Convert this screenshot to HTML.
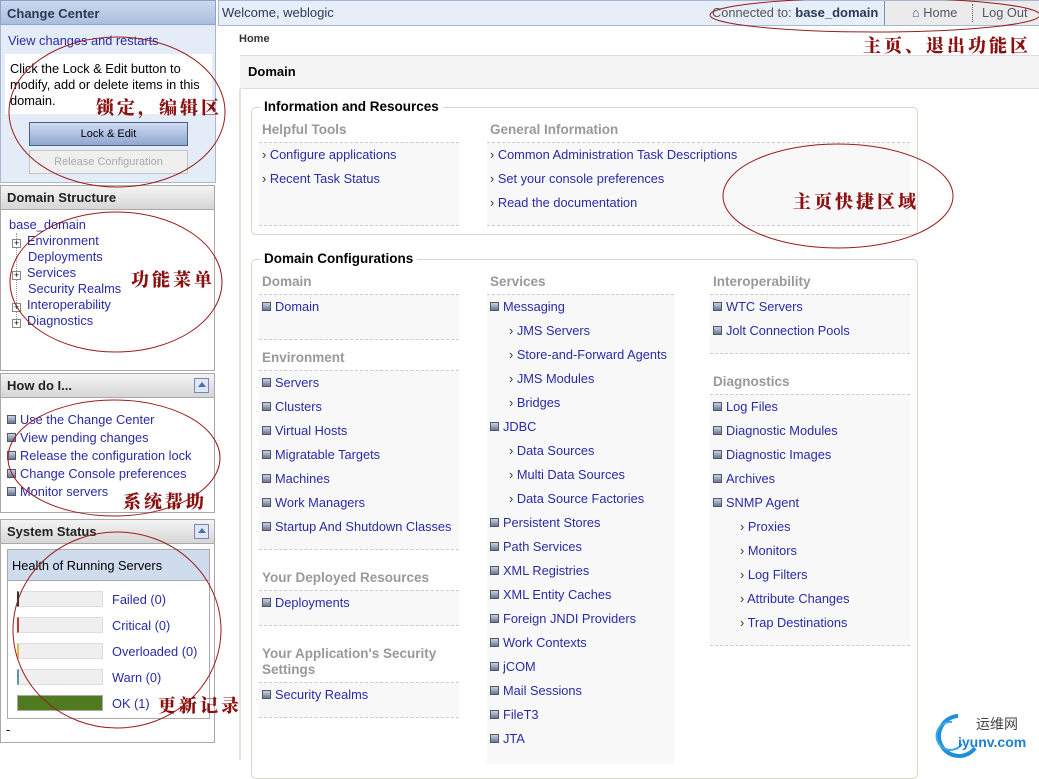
<!DOCTYPE html>
<html><head><meta charset="utf-8">
<style>
*{margin:0;padding:0;box-sizing:border-box}
body{width:1039px;height:760px;overflow:hidden;background:#fff;font-family:"Liberation Sans",Tahoma,sans-serif;font-size:12.8px;position:relative;color:#000}
.p{position:absolute}
.t{position:absolute;white-space:nowrap;line-height:16px;font-size:12.8px}
.l{color:#2a2aa8}
.h{position:absolute;left:0;width:215px;height:25px;border:1px solid #a9a9a9;background:linear-gradient(#f4f4f4,#d6d6d6);font-weight:bold;font-size:13px;padding:4px 6px;color:#222}
.box{position:absolute;border:1px solid #a9a9a9;background:#fff;left:0;width:215px}
.bu::before{content:"";display:inline-block;width:7px;height:7px;border:1px solid #556;background:linear-gradient(#c9d3e6,#6b7895);margin-right:4px;vertical-align:0px}
.sb::before{content:"› ";color:#333}
.hd{position:absolute;color:#999;font-weight:bold;font-size:13.5px;white-space:nowrap}
.col{position:absolute;background:#f8f8f8;border-top:1px dashed #ccc;border-bottom:1px dashed #ccc}
.leg{position:absolute;font-weight:bold;font-size:13.5px;background:#fff;padding:0 4px;white-space:nowrap}
.fs{position:absolute;border:1px solid #d6d6c8;border-radius:5px}
.ico{position:absolute;width:15px;height:15px;border:1px solid #7a86b8;background:#dfe6f5}
.ico::after{content:"";position:absolute;left:3px;top:3px;border:4px solid transparent;border-bottom:5px solid #4a6fb0;border-top:0}
.bar{position:absolute;left:17px;width:86px;height:16px;background:#efefef;border:1px solid #ddd}
.cn{font-family:"Noto Serif CJK SC","Noto Sans CJK SC",serif;font-weight:900;color:#8b1010;font-size:18px;letter-spacing:3px}
.pl{display:inline-block;width:9px;height:9px;border:1px solid #888;background:#fff;font-size:9px;line-height:7px;text-align:center;vertical-align:-1px;margin-right:6px}
</style></head><body>

<!-- Change Center -->
<div class="p" style="left:0;top:0;width:216px;height:183px;background:#e4ecf8;border:1px solid #a9b8d0"></div>
<div class="p" style="left:0;top:0;width:216px;height:25px;background:linear-gradient(#cbd9ee,#a9bedf);border:1px solid #8ea3c6;font-weight:bold;font-size:13px;padding:5px 6px;color:#2b3a55">Change Center</div>
<div class="t l" style="left:8px;top:33px">View changes and restarts</div>
<div class="p" style="left:5px;top:54px;width:207px;height:60px;background:#fff"></div>
<div class="t" style="left:10px;top:61px;line-height:16px;white-space:normal;width:200px">Click the Lock &amp; Edit button to modify, add or delete items in this domain.</div>
<div class="p" style="left:29px;top:122px;width:159px;height:24px;border:1px solid #4a5f85;background:linear-gradient(#cfdcf2,#8fa6cf);text-align:center;line-height:22px;font-size:11px">Lock &amp; Edit</div>
<div class="p" style="left:29px;top:150px;width:159px;height:24px;border:1px solid #c4c4c4;background:#efefef;text-align:center;line-height:22px;font-size:11px;color:#aaa">Release Configuration</div>

<!-- Domain Structure -->
<div class="box" style="top:185px;height:186px"></div>
<div class="h" style="top:185px">Domain Structure</div>
<div class="t l" style="left:9px;top:217px">base_domain</div>
<div class="p" style="left:16px;top:233px;height:88px;border-left:1px dotted #999"></div>
<div class="t" style="left:12px;top:233px;line-height:16px">
<div><span class="pl">+</span><span class="l">Environment</span></div>
<div style="padding-left:16px" class="l">Deployments</div>
<div><span class="pl">+</span><span class="l">Services</span></div>
<div style="padding-left:16px" class="l">Security Realms</div>
<div><span class="pl">+</span><span class="l">Interoperability</span></div>
<div><span class="pl">+</span><span class="l">Diagnostics</span></div>
</div>

<!-- How do I -->
<div class="box" style="top:373px;height:140px"></div>
<div class="h" style="top:373px">How do I...</div>
<div class="ico" style="left:194px;top:378px"></div>
<div class="t" style="left:7px;top:411px;line-height:18px">
<div class="bu l">Use the Change Center</div>
<div class="bu l">View pending changes</div>
<div class="bu l">Release the configuration lock</div>
<div class="bu l">Change Console preferences</div>
<div class="bu l">Monitor servers</div>
</div>

<!-- System Status -->
<div class="box" style="top:519px;height:224px"></div>
<div class="h" style="top:519px">System Status</div>
<div class="ico" style="left:194px;top:524px"></div>
<div class="p" style="left:7px;top:549px;width:203px;height:170px;border:1px solid #aaa"></div>
<div class="p" style="left:8px;top:550px;width:201px;height:31px;background:#cfdcee;border-bottom:1px solid #aaa;padding:8px 4px;font-size:12.8px">Health of Running Servers</div>
<div class="bar" style="top:591px;border-left:2px solid #333"></div><div class="t l" style="left:112px;top:592px">Failed (0)</div>
<div class="bar" style="top:617px;border-left:2px solid #c33"></div><div class="t l" style="left:112px;top:618px">Critical (0)</div>
<div class="bar" style="top:643px;border-left:2px solid #e9b64a"></div><div class="t l" style="left:112px;top:644px">Overloaded (0)</div>
<div class="bar" style="top:669px;border-left:2px solid #5a9aa8"></div><div class="t l" style="left:112px;top:670px">Warn (0)</div>
<div class="bar" style="top:695px;background:#4f7a1f;border-color:#aaa"></div><div class="t l" style="left:112px;top:696px">OK (1)</div>
<div class="t" style="left:6px;top:722px">-</div>

<!-- top bar -->
<div class="p" style="left:218px;top:0;width:821px;height:26px;background:#e6eef9;border:1px solid #a9b8d0"></div>
<div class="t" style="left:222px;top:5px;font-size:13px;color:#2b3a55">Welcome, weblogic</div>
<div class="t" style="left:712px;top:5px;color:#555">Connected to: <b style="color:#2b3a55;font-size:13px">base_domain</b></div>
<div class="p" style="left:884px;top:1px;width:155px;height:24px;background:#ebebeb;border-left:1px solid #7f8fb0"></div>
<div class="t" style="left:912px;top:5px;color:#556"><span style="color:#3a5a9a">⌂</span> Home</div>
<div class="p" style="left:972px;top:4px;height:18px;border-left:1px dotted #666"></div>
<div class="t" style="left:982px;top:5px;color:#556">Log Out</div>

<div class="t" style="left:239px;top:31px;font-size:11px;font-weight:bold;color:#333">Home</div>
<div class="p" style="left:240px;top:55px;width:799px;height:34px;background:#f4f4f4;border-top:1px solid #ddd;border-bottom:1px solid #ddd"></div>
<div class="t" style="left:248px;top:64px;font-weight:bold;font-size:13px">Domain</div>
<div class="p" style="left:239px;top:89px;height:671px;border-left:2px solid #e4e4dc"></div>

<!-- Fieldset 1 -->
<div class="fs" style="left:251px;top:107px;width:667px;height:128px"></div>
<div class="leg" style="left:260px;top:99px">Information and Resources</div>
<div class="hd" style="left:262px;top:122px">Helpful Tools</div>
<div class="hd" style="left:490px;top:122px">General Information</div>
<div class="col" style="left:259px;top:142px;width:200px;height:84px"></div>
<div class="col" style="left:487px;top:142px;width:423px;height:84px"></div>
<div class="t l sb" style="left:262px;top:147px">Configure applications</div>
<div class="t l sb" style="left:262px;top:171px">Recent Task Status</div>
<div class="t l sb" style="left:490px;top:147px">Common Administration Task Descriptions</div>
<div class="t l sb" style="left:490px;top:171px">Set your console preferences</div>
<div class="t l sb" style="left:490px;top:195px">Read the documentation</div>

<!-- Fieldset 2 -->
<div class="fs" style="left:251px;top:259px;width:667px;height:520px"></div>
<div class="leg" style="left:260px;top:251px">Domain Configurations</div>

<div class="hd" style="left:262px;top:274px">Domain</div>
<div class="col" style="left:259px;top:294px;width:200px;height:46px"></div>
<div class="t l bu" style="left:262px;top:299px">Domain</div>
<div class="hd" style="left:262px;top:350px">Environment</div>
<div class="col" style="left:259px;top:370px;width:200px;height:180px"></div>
<div class="t l bu" style="left:262px;top:375px">Servers</div>
<div class="t l bu" style="left:262px;top:399px">Clusters</div>
<div class="t l bu" style="left:262px;top:423px">Virtual Hosts</div>
<div class="t l bu" style="left:262px;top:447px">Migratable Targets</div>
<div class="t l bu" style="left:262px;top:471px">Machines</div>
<div class="t l bu" style="left:262px;top:495px">Work Managers</div>
<div class="t l bu" style="left:262px;top:519px">Startup And Shutdown Classes</div>
<div class="hd" style="left:262px;top:570px">Your Deployed Resources</div>
<div class="col" style="left:259px;top:590px;width:200px;height:36px"></div>
<div class="t l bu" style="left:262px;top:595px">Deployments</div>
<div class="hd" style="left:262px;top:646px;line-height:16px">Your Application's Security<br>Settings</div>
<div class="col" style="left:259px;top:682px;width:200px;height:36px"></div>
<div class="t l bu" style="left:262px;top:687px">Security Realms</div>

<div class="hd" style="left:490px;top:274px">Services</div>
<div class="col" style="left:487px;top:294px;width:187px;height:470px;border-bottom:none"></div>
<div class="t l bu" style="left:490px;top:299px">Messaging</div>
<div class="t l sb" style="left:509px;top:323px">JMS Servers</div>
<div class="t l sb" style="left:509px;top:347px">Store-and-Forward Agents</div>
<div class="t l sb" style="left:509px;top:371px">JMS Modules</div>
<div class="t l sb" style="left:509px;top:395px">Bridges</div>
<div class="t l bu" style="left:490px;top:419px">JDBC</div>
<div class="t l sb" style="left:509px;top:443px">Data Sources</div>
<div class="t l sb" style="left:509px;top:467px">Multi Data Sources</div>
<div class="t l sb" style="left:509px;top:491px">Data Source Factories</div>
<div class="t l bu" style="left:490px;top:515px">Persistent Stores</div>
<div class="t l bu" style="left:490px;top:539px">Path Services</div>
<div class="t l bu" style="left:490px;top:563px">XML Registries</div>
<div class="t l bu" style="left:490px;top:587px">XML Entity Caches</div>
<div class="t l bu" style="left:490px;top:611px">Foreign JNDI Providers</div>
<div class="t l bu" style="left:490px;top:635px">Work Contexts</div>
<div class="t l bu" style="left:490px;top:659px">jCOM</div>
<div class="t l bu" style="left:490px;top:683px">Mail Sessions</div>
<div class="t l bu" style="left:490px;top:707px">FileT3</div>
<div class="t l bu" style="left:490px;top:731px">JTA</div>

<div class="hd" style="left:713px;top:274px">Interoperability</div>
<div class="col" style="left:710px;top:294px;width:200px;height:60px"></div>
<div class="t l bu" style="left:713px;top:299px">WTC Servers</div>
<div class="t l bu" style="left:713px;top:323px">Jolt Connection Pools</div>
<div class="hd" style="left:713px;top:374px">Diagnostics</div>
<div class="col" style="left:710px;top:394px;width:200px;height:252px"></div>
<div class="t l bu" style="left:713px;top:399px">Log Files</div>
<div class="t l bu" style="left:713px;top:423px">Diagnostic Modules</div>
<div class="t l bu" style="left:713px;top:447px">Diagnostic Images</div>
<div class="t l bu" style="left:713px;top:471px">Archives</div>
<div class="t l bu" style="left:713px;top:495px">SNMP Agent</div>
<div class="t l sb" style="left:740px;top:519px">Proxies</div>
<div class="t l sb" style="left:740px;top:543px">Monitors</div>
<div class="t l sb" style="left:740px;top:567px">Log Filters</div>
<div class="t l sb" style="left:740px;top:591px">Attribute Changes</div>
<div class="t l sb" style="left:740px;top:615px">Trap Destinations</div>

<!-- annotations -->
<svg class="p" style="left:0;top:0" width="1039" height="760">
<g fill="none" stroke="#9b1c1c" stroke-width="1">
<ellipse cx="117" cy="112" rx="108" ry="75"/>
<ellipse cx="116" cy="282" rx="106" ry="70"/>
<ellipse cx="114" cy="458" rx="106" ry="58"/>
<ellipse cx="117" cy="630" rx="104" ry="98"/>
<ellipse cx="875" cy="15" rx="165" ry="17"/>
<ellipse cx="838" cy="196" rx="115" ry="52"/>
</g>
<path d="M958 716 A20 20 0 1 0 975 748" fill="none" stroke="#1e8fd8" stroke-width="4"/>
<path d="M952 722 A14 14 0 1 0 962 744" fill="none" stroke="#3aa7e8" stroke-width="2"/>
</svg>
<div class="t cn" style="left:96px;top:96px;line-height:22px">锁定，编辑区</div>
<div class="t cn" style="left:131px;top:268px;line-height:22px">功能菜单</div>
<div class="t cn" style="left:123px;top:490px;line-height:22px">系统帮助</div>
<div class="t cn" style="left:158px;top:694px;line-height:22px">更新记录</div>
<div class="t cn" style="left:863px;top:34px;line-height:22px">主页、退出功能区</div>
<div class="t cn" style="left:793px;top:190px;line-height:22px">主页快捷区域</div>
<div class="t" style="left:976px;top:716px;font-family:'Noto Sans CJK SC',sans-serif;font-size:14px;color:#444">运维网</div>
<div class="t" style="left:958px;top:734px;font-weight:bold;font-size:14px;color:#1e7fd0">iyunv.com</div>
</body></html>
